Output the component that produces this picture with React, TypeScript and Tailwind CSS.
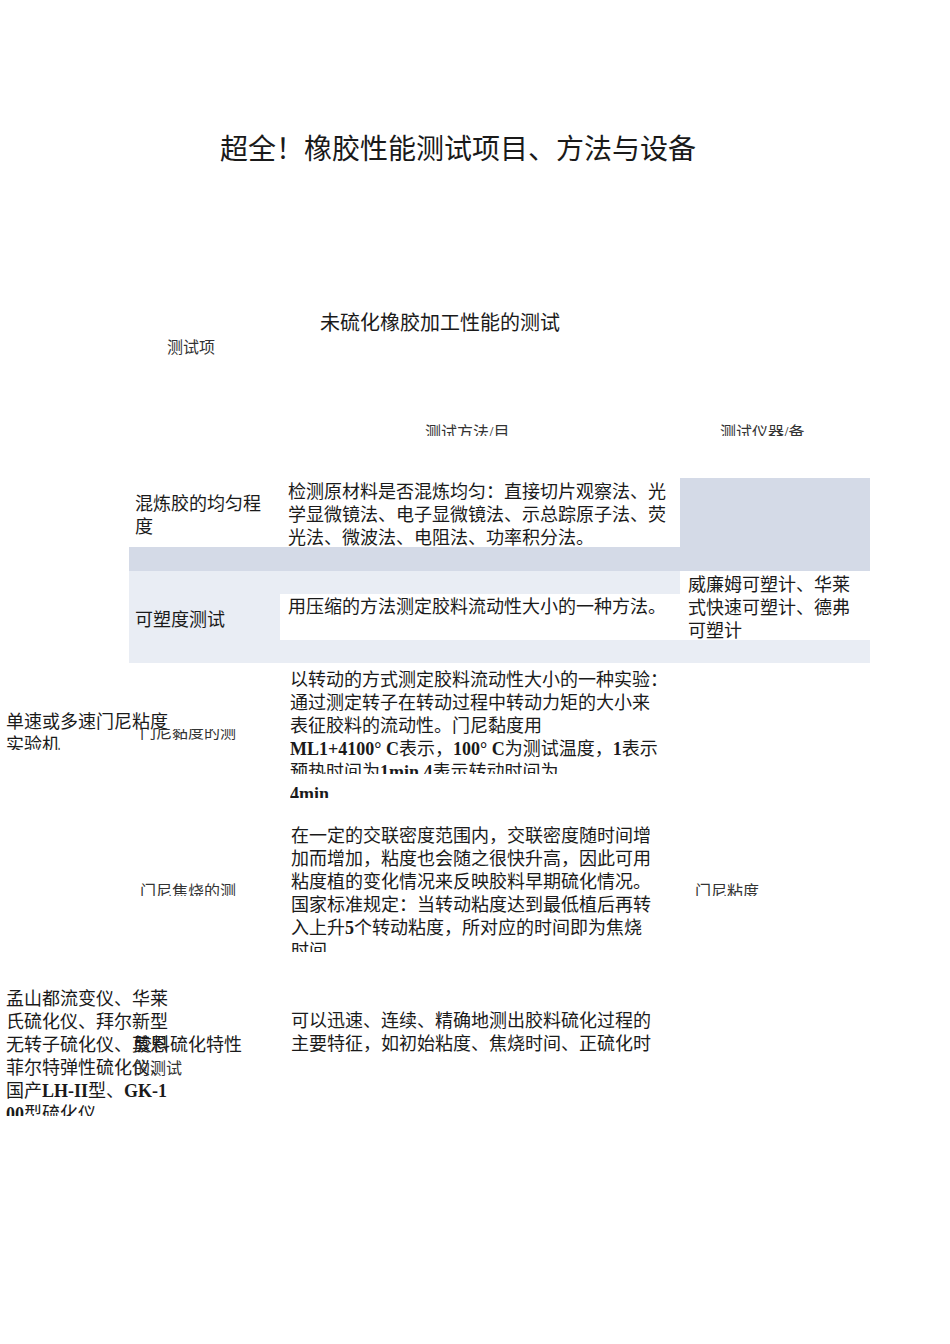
export default function App() {
  return (
    <div className="w-[950px] h-[1344px] bg-white overflow-hidden text-[#1a1a1a] font-['Liberation_Serif','Noto_Sans_CJK_SC',serif]">
      {/* Heading */}
      <div className="pt-[132px] pl-[220px] text-[28px] leading-[36px] whitespace-nowrap">超全！橡胶性能测试项目、方法与设备</div>
      <div className="mt-[141px] pl-[320px] text-[20px] leading-[28px] whitespace-nowrap">未硫化橡胶加工性能的测试</div>
      <div className="mt-[1px] pl-[167px] text-[16px] leading-[20px] text-[#333]">测试项</div>

      {/* Column headers, clipped */}
      <div className="mt-[64px] h-[14px] overflow-hidden flex text-[16px] leading-[20px] text-[#333]">
        <div className="w-[425px]" />
        <div className="w-[295px] whitespace-nowrap pt-[1px]">测试方法/目</div>
        <div className="whitespace-nowrap pt-[1px]">测试仪器/备</div>
      </div>

      {/* Shaded table */}
      <div className="mt-[42px] flex text-[18px] leading-[23px]">
        <div className="w-[129px]" />
        <div className="w-[151px] flex flex-col">
          <div className="h-[69px] bg-white pl-[6px] pt-[15px] w-[140px]">混炼胶的均匀程<br />度</div>
          <div className="h-[24px] bg-[#d4dae7]" />
          <div className="h-[69px] bg-[#e9edf4] pl-[6px] pt-[38px]">可塑度测试</div>
          <div className="h-[23px] bg-[#e9edf4]" />
        </div>
        <div className="w-[400px] flex flex-col">
          <div className="h-[69px] bg-white pl-[8px] pt-[3px] whitespace-nowrap">
            检测原材料是否混炼均匀：直接切片观察法、光<br />
            学显微镜法、电子显微镜法、示总踪原子法、荧<br />
            光法、微波法、电阻法、功率积分法。
          </div>
          <div className="h-[24px] bg-[#d4dae7]" />
          <div className="h-[23px] bg-[#e9edf4]" />
          <div className="h-[46px] bg-white pl-[8px] pt-[2px] whitespace-nowrap">用压缩的方法测定胶料流动性大小的一种方法。</div>
          <div className="h-[23px] bg-[#e9edf4]" />
        </div>
        <div className="w-[190px] flex flex-col">
          <div className="h-[93px] bg-[#d4dae7]" />
          <div className="h-[69px] bg-white pl-[8px] pt-[3px] whitespace-nowrap">
            威廉姆可塑计、华莱<br />
            式快速可塑计、德弗<br />
            可塑计
          </div>
          <div className="h-[23px] bg-[#e9edf4]" />
        </div>
      </div>

      {/* Mooney viscosity */}
      <div className="h-[137px] flex text-[18px] leading-[23px]">
        <div className="w-[129px] pl-[6px] pt-[48px] whitespace-nowrap">
          <div className="h-[39px] overflow-hidden w-[170px]">单速或多速门尼粘度<br />实验机</div>
        </div>
        <div className="w-[151px] pl-[11px] pt-[66px]">
          <div className="h-[13px] overflow-hidden text-[16px] leading-[20px] text-[#333] whitespace-nowrap">
            <div className="-mt-[6px]">门尼黏度的测</div>
          </div>
        </div>
        <div className="w-[400px] pl-[10px] pt-[6px] whitespace-nowrap">
          <div className="h-[105px] overflow-hidden">
            以转动的方式测定胶料流动性大小的一种实验：<br />
            通过测定转子在转动过程中转动力矩的大小来<br />
            表征胶料的流动性。门尼黏度用<br />
            <span className="font-bold">ML1+4100° C</span>表示，<span className="font-bold">100° C</span>为测试温度，<span className="font-bold">1</span>表示<br />
            预热时间为<span className="font-bold">1min,4</span>表示转动时间为
          </div>
          <div className="mt-[9px] h-[15px] overflow-hidden font-bold">4min</div>
        </div>
      </div>

      {/* Mooney scorch */}
      <div className="h-[160px] flex text-[18px] leading-[23px]">
        <div className="w-[129px]" />
        <div className="w-[151px] pl-[11px] pt-[83px]">
          <div className="h-[13px] overflow-hidden text-[16px] leading-[20px] text-[#333] whitespace-nowrap">
            <div className="-mt-[1px]">门尼焦烧的测</div>
          </div>
        </div>
        <div className="w-[400px] pl-[11px] pt-[25px] whitespace-nowrap">
          <div className="h-[127px] overflow-hidden">
            在一定的交联密度范围内，交联密度随时间增<br />
            加而增加，粘度也会随之很快升高，因此可用<br />
            粘度植的变化情况来反映胶料早期硫化情况。<br />
            国家标准规定：当转动粘度达到最低植后再转<br />
            入上升<span className="font-bold">5</span>个转动粘度，所对应的时间即为焦烧<br />
            时间.
          </div>
        </div>
        <div className="w-[190px] pl-[15px] pt-[83px]">
          <div className="h-[13px] overflow-hidden text-[16px] leading-[20px] text-[#333] whitespace-nowrap">
            <div className="-mt-[1px]">门尼粘度</div>
          </div>
        </div>
      </div>

      {/* Cure characteristics */}
      <div className="flex text-[18px] leading-[23px]">
        <div className="w-[129px] pl-[6px] pt-[28px] whitespace-nowrap">
          <div className="h-[128px] w-[200px] overflow-hidden">
            孟山都流变仪、华莱<br />
            氏硫化仪、拜尔新型<br />
            无转子硫化仪、莫恩<br />
            菲尔特弹性硫化仪、<br />
            国产<span className="font-bold">LH-II</span>型、<span className="font-bold">GK-1</span><br />
            <span className="font-bold">00</span>型硫化仪
          </div>
        </div>
        <div className="w-[151px] pl-[5px] pt-[74px] whitespace-nowrap">
          <div>胶料硫化特性</div>
          <div className="text-[16px] leading-[23px] text-[#333]">的测试</div>
        </div>
        <div className="w-[400px] pl-[11px] pt-[50px] whitespace-nowrap">
          可以迅速、连续、精确地测出胶料硫化过程的<br />
          主要特征，如初始粘度、焦烧时间、正硫化时
        </div>
      </div>
    </div>
  );
}
